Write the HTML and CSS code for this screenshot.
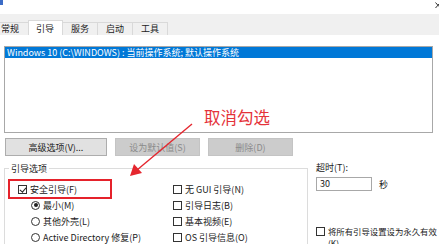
FILE: index.html
```html
<!DOCTYPE html>
<html lang="zh-CN">
<head>
  <meta charset="utf-8">
  <meta name="viewport" content="width=device-width, initial-scale=1">
  <link rel="stylesheet" href="styles.css">
  <title>系统配置</title>
</head>
<body>

<div class="window">
  <!-- Title bar (mostly cut off) -->
  <div class="titlebar">
    <span class="app-icon"></span>
    <svg class="close" width="4" height="8" viewBox="0 0 4 8"><path d="M0.5 1.5 L4 5.5 M0.5 7 L4 3" stroke="#333" stroke-width="1"/></svg>
  </div>

  <!-- Tabs -->
  <div class="tabs">
    <div class="tab first">常规</div>
    <div class="tab active">引导</div>
    <div class="tab">服务</div>
    <div class="tab">启动</div>
    <div class="tab">工具</div>
  </div>

  <div class="panel">
    <!-- OS list -->
    <div class="os-list">
      <div class="os-item selected">Windows 10 (C:\WINDOWS) : 当前操作系统; 默认操作系统</div>
    </div>

    <!-- Buttons -->
    <div class="buttons">
      <button class="btn wide">高级选项(V)...</button>
      <button class="btn" disabled>设为默认值(S)</button>
      <button class="btn" disabled>删除(D)</button>
    </div>

    <!-- Boot options -->
    <div class="options">
      <div class="group">
        <div class="group-title">引导选项</div>
        <div class="group-body">
          <div class="col">
            <div class="opt highlight"><span class="box checked"></span>安全引导(F)</div>
            <div class="opt sub"><span class="radio on"></span>最小(M)</div>
            <div class="opt sub"><span class="radio"></span>其他外壳(L)</div>
            <div class="opt sub"><span class="radio"></span>Active Directory 修复(P)</div>
          </div>
          <div class="col">
            <div class="opt"><span class="box"></span>无 GUI 引导(N)</div>
            <div class="opt"><span class="box"></span>引导日志(B)</div>
            <div class="opt"><span class="box"></span>基本视频(E)</div>
            <div class="opt"><span class="box"></span>OS 引导信息(O)</div>
          </div>
        </div>
      </div>

      <div class="side">
        <div class="timeout-label">超时(T):</div>
        <div class="timeout-row">
          <div class="timeout-input">30</div>
          <span>秒</span>
        </div>
        <div class="opt permanent"><span class="box"></span><span class="perm-text">将所有引导设置设为永久有效<br>(K)</span></div>
      </div>
    </div>
  </div>

  <!-- Annotation -->
  <div class="note">取消勾选</div>
  <svg class="arrow" width="439" height="244" viewBox="0 0 439 244">
    <line x1="192" y1="124" x2="137" y2="170" stroke="#e5262e" stroke-width="1.4"/>
    <polygon points="130,176 134,164 142,173" fill="#e5262e"/>
  </svg>
</div>

</body>
</html>
```

FILE: styles.css
```css
body {
  margin: 0;
  padding: 0;
  background-color: #fff;
  font-family: "Noto Sans CJK SC", "Liberation Sans", sans-serif;
  font-size: 9px;
  color: #222;
}
.window {
  position: relative;
  width: 439px;
  height: 244px;
  overflow: hidden;
  background-color: #fff;
}
.titlebar {
  height: 14px;
  display: flex;
  justify-content: space-between;
  align-items: flex-start;
}
.app-icon {
  width: 3px;
  height: 5px;
  background-color: #3b6cc6;
}
.close {
  margin-top: 1px;
}
.tabs {
  height: 21px;
  background-color: #f0f0f0;
  display: flex;
  align-items: flex-end;
}
.tab {
  height: 13px;
  line-height: 12px;
  padding: 0 8px;
  border: 1px solid #d9d9d9;
  border-bottom: none;
  margin-right: -1px;
  background-color: #f0f0f0;
  box-sizing: border-box;
  font-size: 9px;
}
.tab.first {
  margin-left: -14px;
  padding: 0 9px 0 14px;
}
.tab.active {
  height: 15px;
  line-height: 16px;
  background-color: #fff;
  padding: 0 8px 0 7px;
  position: relative;
  z-index: 1;
}
.panel {
  padding: 0 0 0 4px;
}
.os-list {
  margin-top: 11px;
  width: 429px;
  height: 87px;
  border: 1px solid #a8a8a8;
  box-sizing: border-box;
}
.os-item {
  height: 11px;
  line-height: 11px;
  padding-left: 2px;
  white-space: nowrap;
}
.os-item.selected {
  background-color: #0078d7;
  color: #fff;
}
.buttons {
  display: flex;
  gap: 8px;
  margin-top: 5px;
  margin-left: 1px;
}
.btn {
  width: 85px;
  height: 18px;
  padding: 0;
  font-family: "Noto Sans CJK SC", "Liberation Sans", sans-serif;
  font-size: 9px;
  color: #222;
  background-color: #e1e1e1;
  border: 1px solid #adadad;
}
.btn.wide {
  width: 102px;
}
.btn:disabled {
  background-color: #cccccc;
  border-color: #c4c4c4;
  color: #8a8a8a;
}
.options {
  display: flex;
  align-items: flex-start;
}
.group {
  width: 304px;
  height: 90px;
  margin-top: 12px;
  border: 1px solid #dcdcdc;
  box-sizing: border-box;
}
.group-title {
  width: fit-content;
  margin: -6px 0 0 4px;
  padding: 0 2px;
  line-height: 11px;
  background-color: #fff;
}
.group-body {
  display: grid;
  grid-template-columns: 163px 1fr;
  margin-top: 7px;
  padding-left: 5px;
}
.opt {
  display: flex;
  align-items: center;
  height: 16px;
  white-space: nowrap;
}
.opt.highlight {
  width: 100px;
  padding-left: 8px;
  box-sizing: border-box;
  outline: 2.5px solid #e5222b;
  outline-offset: 0;
}
.opt.sub {
  padding-left: 21px;
}
.box, .radio {
  display: inline-block;
  flex: none;
  width: 9px;
  height: 9px;
  border: 1px solid #333;
  box-sizing: border-box;
  margin-right: 3px;
  position: relative;
  background-color: #fff;
}
.radio {
  border-radius: 50%;
}
.radio.on::after {
  content: "";
  position: absolute;
  left: 1.5px;
  top: 1.5px;
  width: 4px;
  height: 4px;
  border-radius: 50%;
  background-color: #222;
}
.box.checked::after {
  content: "";
  position: absolute;
  left: 2px;
  top: 0;
  width: 2.5px;
  height: 5px;
  border: solid #222;
  border-width: 0 1px 1px 0;
  transform: rotate(40deg);
}
.side {
  margin-left: 8px;
  padding-top: 7px;
}
.timeout-label {
  line-height: 10px;
}
.timeout-row {
  display: flex;
  align-items: center;
  gap: 7px;
  margin-top: 4px;
}
.timeout-input {
  width: 56px;
  height: 14px;
  line-height: 12px;
  border: 1px solid #a8a8a8;
  box-sizing: border-box;
  padding-left: 3px;
}
.permanent {
  margin-top: 34px;
  align-items: flex-start;
}
.permanent .box {
  margin-top: 2px;
}
.perm-text {
  white-space: nowrap;
  line-height: 12px;
  font-size: 8.4px;
}
.note {
  position: absolute;
  left: 204px;
  top: 107px;
  font-size: 16.5px;
  line-height: 20px;
  color: #e5323a;
  white-space: nowrap;
}
.arrow {
  position: absolute;
  left: 0;
  top: 0;
  pointer-events: none;
}
```
